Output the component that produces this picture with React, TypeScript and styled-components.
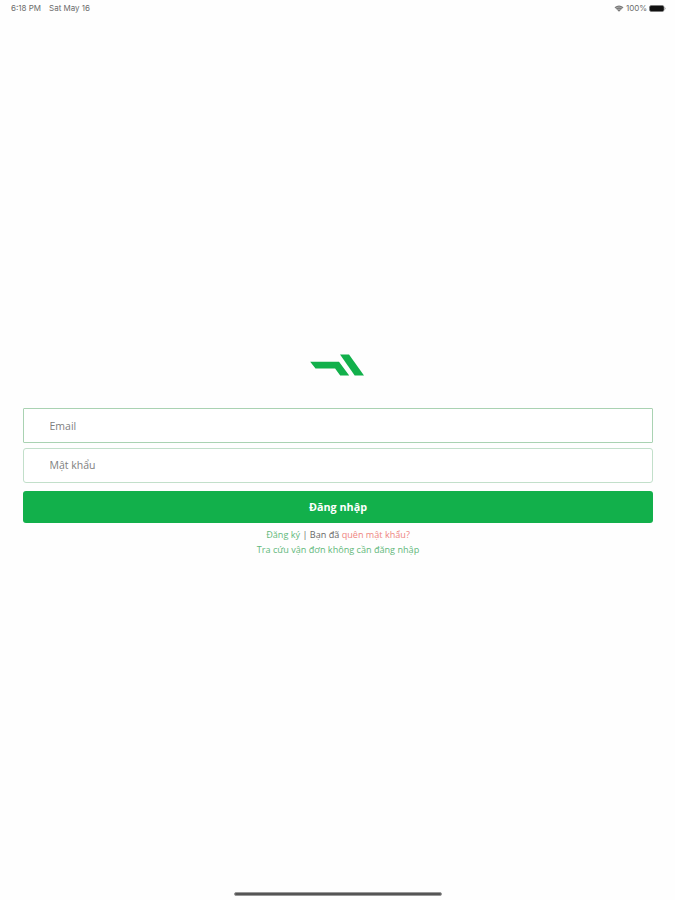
import React from "react";
import styled, { createGlobalStyle } from "styled-components";

const GlobalStyle = createGlobalStyle`
  * { box-sizing: border-box; }
  body { margin: 0; background: #fefefe; }
`;

const Screen = styled.div`
  display: flex;
  flex-direction: column;
  height: 900px;
  width: 675px;
  background: #fefefe;
  font-family: "Open Sans", "Noto Sans", sans-serif;
  overflow: hidden;
`;

const StatusBar = styled.header`
  display: flex;
  justify-content: space-between;
  height: 17px;
  padding: 0 9px 0 11px;
  font: 8px/17px Inter, sans-serif;
  color: #6c6c6c;
`;

const StatusGroup = styled.div<{ $gap: number }>`
  display: flex;
  align-items: center;
  gap: ${(p) => p.$gap}px;
  white-space: nowrap;
`;

const Text = styled.span<{ $width: number }>`
  width: ${(p) => p.$width}px;
`;

const Login = styled.main`
  display: flex;
  flex-direction: column;
  flex: 1;
  padding: 337px 22px 0 23px;
`;

const Logo = styled.svg`
  align-self: center;
  width: 54px;
  height: 22px;
  margin: 0 2px 32px 0;
`;

const Field = styled.input<{ $round?: boolean }>`
  width: 100%;
  height: 35px;
  padding: 0 25.5px;
  border: 1px solid ${(p) => (p.$round ? "#c2dfca" : "#a9d2b2")};
  border-radius: ${(p) => (p.$round ? 3 : 1)}px;
  margin-bottom: ${(p) => (p.$round ? 8.5 : 4.5)}px;
  background: #fff;
  font: 10.5px "Open Sans", sans-serif;
  outline: none;
  &::placeholder { color: #808080; opacity: 1; }
`;

const Submit = styled.button`
  height: 32px;
  border: 0;
  border-radius: 3px;
  padding: 0 0 1px;
  background: #12b04b;
  color: #fff;
  font: 700 10.8px "Open Sans", sans-serif;
`;

const Links = styled.div`
  display: flex;
  flex-direction: column;
  align-items: center;
  margin-top: 5px;
  font-size: 9.1px;
  line-height: 14.5px;
  color: #686868;
`;

const Link = styled.a<{ $danger?: boolean }>`
  color: ${(p) => (p.$danger ? "#ee8580" : "#62b87b")};
`;

const HomeIndicator = styled.div`
  align-self: center;
  width: 208px;
  height: 4px;
  margin-bottom: 4px;
  border-radius: 2px;
  background: #555;
  border: 0.5px solid #999;
`;

export default function App() {
  return (
    <Screen>
      <GlobalStyle />
      <StatusBar>
        <StatusGroup $gap={7}>
          <Text $width={31}>6:18 PM</Text>
          <Text $width={42}>Sat May 16</Text>
        </StatusGroup>
        <StatusGroup $gap={2}>
          <svg width="10" height="7" viewBox="0 0 10 7">
            <path d="M0.5 2.2Q5-1.3 9.5 2.2L5 6.8Z" fill="#777" />
            <path d="M1.7 3.2Q5 .8 8.3 3.2M3.2 4.8Q5 3.5 6.8 4.8" fill="none" stroke="#ddd" strokeWidth=".5" />
          </svg>
          <Text $width={21}>100%</Text>
          <svg width="17" height="7" viewBox="0 0 17 7">
            <rect x=".5" y=".5" width="14.5" height="6" rx="1.7" fill="#111" stroke="#777" strokeWidth=".7" />
            <path d="M15.8 2.5q.8 1 0 2" fill="none" stroke="#999" />
          </svg>
        </StatusGroup>
      </StatusBar>
      <Login>
        <Logo viewBox="0 0 54 22" fill="#12b04b">
          <path d="M.2 7.7H29L39.2 21.5H30.2L25.1 14.6H5.5Z" />
          <path d="M30 .4H39L54 21.5H44.7Z" />
        </Logo>
        <Field placeholder="Email" aria-label="Email" />
        <Field $round type="password" placeholder="Mật khẩu" aria-label="Mật khẩu" />
        <Submit>Đăng nhập</Submit>
        <Links>
          <div>
            <Link>Đăng ký</Link> | Bạn đã <Link $danger>quên mật khẩu?</Link>
          </div>
          <Link>Tra cứu vận đơn không cần đăng nhập</Link>
        </Links>
      </Login>
      <HomeIndicator />
    </Screen>
  );
}
